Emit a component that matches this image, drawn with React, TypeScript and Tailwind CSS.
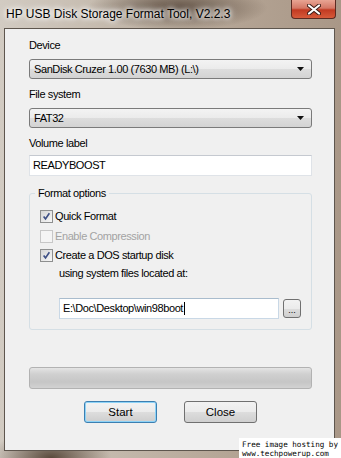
import React from "react";

const font = { fontFamily: '"Liberation Sans", Arial, sans-serif' };

function Combo({ text }: { text: string }) {
  return (
    <div className="flex h-[20px] w-[283px] items-center justify-between rounded-[3px] border border-[#7a7a7a] bg-[linear-gradient(#f3f3f3_0%,#ebebeb_50%,#dddddd_51%,#d3d3d3_100%)] pl-[4px] pr-[7px] text-[11px] leading-[13px] text-black">
      <span>{text}</span>
      <svg width="7" height="4" viewBox="0 0 7 4">
        <path d="M0 0h7L3.5 4z" fill="#111" />
      </svg>
    </div>
  );
}

function Check({ checked, disabled }: { checked?: boolean; disabled?: boolean }) {
  return (
    <div
      className={
        disabled
          ? "flex h-[13px] w-[13px] items-center justify-center border border-[#c7c7c7] bg-[#f4f4f4]"
          : "flex h-[13px] w-[13px] items-center justify-center border border-[#8e8f8f] bg-[linear-gradient(135deg,#d6d6d6,#f7f7f7)] p-[1px]"
      }
    >
      {checked && (
        <svg width="11" height="11" viewBox="0 0 11 11">
          <path d="M2 5.5L4.3 8.5L9 1.5" fill="none" stroke="#3d4f85" strokeWidth="2" />
        </svg>
      )}
    </div>
  );
}

export default function App() {
  return (
    <div
      className="relative flex h-[458px] w-[341px] flex-col overflow-hidden bg-[radial-gradient(ellipse_90px_22px_at_52%_8px,#5f4f42_0%,rgba(95,79,66,0)_100%),radial-gradient(ellipse_60px_30px_at_15%_100%,#5a4a3c_0%,rgba(90,74,60,0)_100%),linear-gradient(90deg,#d2cbc2_0%,#c3b8ab_35%,#b3a393_70%,#a99787_100%)]"
      style={font}
    >
      {/* Title bar */}
      <div className="relative flex h-[28px] shrink-0 items-center pl-[6px] text-[12px] text-black">
        <span className="[text-shadow:0_0_6px_#ffffff,0_0_4px_#ffffff,0_0_8px_#ffffff]">HP USB Disk Storage Format Tool, V2.2.3</span>
        <div className="absolute right-[5px] top-0 flex h-[19px] w-[45px] items-center justify-center rounded-b-[4px] border border-t-0 border-[#5b2a22] bg-[linear-gradient(#e8a493_0%,#d47866_45%,#c23a22_55%,#d65a3a_100%)]">
          <svg width="14" height="11" viewBox="0 0 14 11">
            <path d="M2 1.5L12 9.5M12 1.5L2 9.5" stroke="#3a1a14" strokeWidth="4" strokeLinecap="round" />
            <path d="M2 1.5L12 9.5M12 1.5L2 9.5" stroke="#ffffff" strokeWidth="2.2" strokeLinecap="round" />
          </svg>
        </div>
      </div>

      {/* Client area */}
      <div className="mb-[7px] ml-[4px] mr-[6px] flex flex-1 flex-col border border-[#5e564e] bg-[#f0f0f0] pl-[24px] text-[11px] leading-[13px] tracking-[-0.4px] text-black">
        <div className="mt-[10px] h-[13px]">Device</div>
        <div className="mt-[7px]">
          <Combo text="SanDisk Cruzer 1.00 (7630 MB) (L:\)" />
        </div>
        <div className="mt-[9px] h-[13px]">File system</div>
        <div className="mt-[7px]">
          <Combo text="FAT32" />
        </div>
        <div className="mt-[9px] h-[13px]">Volume label</div>
        <div className="mt-[5px] flex h-[21px] w-[283px] items-center border border-[#dfe3e8] border-t-[#c5c9d0] bg-white pl-[3px]">
          READYBOOST
        </div>

        {/* Group box */}
        <div className="relative mt-[17px] w-[283px] rounded-[3px] border border-[#d5dfe5] pb-[10px] pl-[10px]">
          <div className="absolute left-[5px] top-[-7px] bg-[#f0f0f0] px-[3px] leading-[13px]">Format options</div>
          <div className="mt-[12px] flex h-[20px] items-center gap-[2px]">
            <Check checked />
            <span>Quick Format</span>
          </div>
          <div className="flex h-[20px] items-center gap-[2px]">
            <Check disabled />
            <span className="text-[#a3a3a3]">Enable Compression</span>
          </div>
          <div className="flex h-[19px] items-center gap-[2px]">
            <Check checked />
            <span>Create a DOS startup disk</span>
          </div>
          <div className="mt-[1px] h-[14px] pl-[19px] leading-[14px]">using system files located at:</div>
          <div className="mt-[18px] flex items-center gap-[4px] pl-[19px]">
            <div className="flex h-[21px] w-[220px] items-center border border-[#c9d8e6] border-t-[#a9bccd] bg-white pl-[3px]">
              <span>E:\Doc\Desktop\win98boot</span>
              <span className="ml-[1px] h-[13px] w-[1px] bg-black" />
            </div>
            <div className="flex h-[19px] w-[18px] items-end justify-center rounded-[3px] border border-[#707070] bg-[linear-gradient(#f2f2f2_0%,#ebebeb_50%,#dddddd_51%,#cfcfcf_100%)] pb-[2px] text-[9px] leading-[9px] tracking-normal">
              ...
            </div>
          </div>
        </div>

        {/* Progress bar */}
        <div className="mt-[37px] h-[22px] w-[283px] rounded-[3px] border border-[#b2b2b2] bg-[linear-gradient(#e4e4e4_0%,#d0d0d0_30%,#c6c6c6_70%,#d2d2d2_100%)]" />

        {/* Buttons */}
        <div className="mt-[12px] flex gap-[27px] pl-[55px] tracking-normal">
          <div className="flex h-[22px] w-[73px] items-center justify-center rounded-[3px] border border-[#3c7fb1] bg-[linear-gradient(#eaf6fd_0%,#d9f0fc_50%,#bee6fd_51%,#a7d9f5_100%)] shadow-[inset_0_0_0_1px_#8ed3f7]">
            <div className="flex h-[18px] w-[69px] items-center justify-center rounded-[2px] bg-[linear-gradient(#f2f2f2_0%,#ebebeb_50%,#dddddd_51%,#cfcfcf_100%)] text-[11.5px]">
              Start
            </div>
          </div>
          <div className="flex h-[22px] w-[73px] items-center justify-center rounded-[3px] border border-[#707070] bg-[linear-gradient(#f2f2f2_0%,#ebebeb_50%,#dddddd_51%,#cfcfcf_100%)] text-[11.5px]">
            Close
          </div>
        </div>
      </div>

      {/* Watermark */}
      <div
        className="absolute bottom-0 right-0 bg-white px-[3px] pt-[2px] text-[7.6px] leading-[9px] text-black"
        style={{ fontFamily: '"DejaVu Sans Mono", "Liberation Mono", monospace' }}
      >
        <div>Free image hosting by</div>
        <div>www.techpowerup.com</div>
      </div>
    </div>
  );
}
